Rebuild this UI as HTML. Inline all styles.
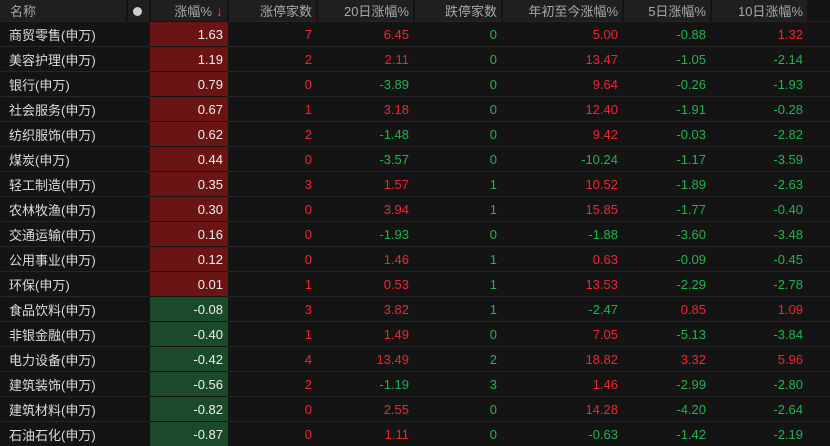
<!DOCTYPE html>
<html><head><meta charset="utf-8"><style>
*{margin:0;padding:0;box-sizing:border-box}
body{width:830px;height:444px;overflow:hidden;background:#141414;font-family:"Liberation Sans","Noto Sans CJK SC",sans-serif;font-size:13px;color:#dcdcdc}
table{border-collapse:collapse;table-layout:fixed;width:830px}
th{height:21px;background:#1f1f1f;color:#a8a8a8;font-weight:normal;text-align:right;padding-right:4px;border-right:2px solid #141414;font-size:13px;white-space:nowrap}
th.n{text-align:left;padding-left:10px}
th.last{border-right:none}
td{height:25px;border-top:1px solid #262626;text-align:right;padding-right:5px;white-space:nowrap;padding-top:1px}
td.n{text-align:left;padding-left:9px;color:#dcdcdc}
.r{color:#f0262e}.g{color:#1fb54a}
.cr{background:#6a1414;color:#eee;border-top:1px solid #141414}
.cg{background:#1a4a2a;color:#eee;border-top:1px solid #141414}
.dot{display:inline-block;width:9px;height:9px;border-radius:50%;background:#cfcfcf;vertical-align:-1px;margin-right:3px}
.arr{color:#f0462e;font-size:15px;font-weight:bold}
</style></head><body>
<table>
<colgroup><col style="width:127px"><col style="width:23px"><col style="width:78px"><col style="width:89px"><col style="width:97px"><col style="width:88px"><col style="width:121px"><col style="width:88px"><col style="width:97px"><col style="width:22px"></colgroup>
<tr><th class="n">名称</th><th style="text-align:center;padding:0"><span class="dot"></span></th><th>涨幅% <span class="arr">↓</span></th><th>涨停家数</th><th>20日涨幅%</th><th>跌停家数</th><th>年初至今涨幅%</th><th>5日涨幅%</th><th>10日涨幅%</th><th class="last" style="background:#141414"></th></tr>
<tr><td class="n">商贸零售(申万)</td><td></td><td class="cr">1.63</td><td class="r">7</td><td class="r">6.45</td><td class="g">0</td><td class="r">5.00</td><td class="g">-0.88</td><td class="r">1.32</td><td></td></tr>
<tr><td class="n">美容护理(申万)</td><td></td><td class="cr">1.19</td><td class="r">2</td><td class="r">2.11</td><td class="g">0</td><td class="r">13.47</td><td class="g">-1.05</td><td class="g">-2.14</td><td></td></tr>
<tr><td class="n">银行(申万)</td><td></td><td class="cr">0.79</td><td class="r">0</td><td class="g">-3.89</td><td class="g">0</td><td class="r">9.64</td><td class="g">-0.26</td><td class="g">-1.93</td><td></td></tr>
<tr><td class="n">社会服务(申万)</td><td></td><td class="cr">0.67</td><td class="r">1</td><td class="r">3.18</td><td class="g">0</td><td class="r">12.40</td><td class="g">-1.91</td><td class="g">-0.28</td><td></td></tr>
<tr><td class="n">纺织服饰(申万)</td><td></td><td class="cr">0.62</td><td class="r">2</td><td class="g">-1.48</td><td class="g">0</td><td class="r">9.42</td><td class="g">-0.03</td><td class="g">-2.82</td><td></td></tr>
<tr><td class="n">煤炭(申万)</td><td></td><td class="cr">0.44</td><td class="r">0</td><td class="g">-3.57</td><td class="g">0</td><td class="g">-10.24</td><td class="g">-1.17</td><td class="g">-3.59</td><td></td></tr>
<tr><td class="n">轻工制造(申万)</td><td></td><td class="cr">0.35</td><td class="r">3</td><td class="r">1.57</td><td class="g">1</td><td class="r">10.52</td><td class="g">-1.89</td><td class="g">-2.63</td><td></td></tr>
<tr><td class="n">农林牧渔(申万)</td><td></td><td class="cr">0.30</td><td class="r">0</td><td class="r">3.94</td><td class="g">1</td><td class="r">15.85</td><td class="g">-1.77</td><td class="g">-0.40</td><td></td></tr>
<tr><td class="n">交通运输(申万)</td><td></td><td class="cr">0.16</td><td class="r">0</td><td class="g">-1.93</td><td class="g">0</td><td class="g">-1.88</td><td class="g">-3.60</td><td class="g">-3.48</td><td></td></tr>
<tr><td class="n">公用事业(申万)</td><td></td><td class="cr">0.12</td><td class="r">0</td><td class="r">1.46</td><td class="g">1</td><td class="r">0.63</td><td class="g">-0.09</td><td class="g">-0.45</td><td></td></tr>
<tr><td class="n">环保(申万)</td><td></td><td class="cr">0.01</td><td class="r">1</td><td class="r">0.53</td><td class="g">1</td><td class="r">13.53</td><td class="g">-2.29</td><td class="g">-2.78</td><td></td></tr>
<tr><td class="n">食品饮料(申万)</td><td></td><td class="cg">-0.08</td><td class="r">3</td><td class="r">3.82</td><td class="g">1</td><td class="g">-2.47</td><td class="r">0.85</td><td class="r">1.09</td><td></td></tr>
<tr><td class="n">非银金融(申万)</td><td></td><td class="cg">-0.40</td><td class="r">1</td><td class="r">1.49</td><td class="g">0</td><td class="r">7.05</td><td class="g">-5.13</td><td class="g">-3.84</td><td></td></tr>
<tr><td class="n">电力设备(申万)</td><td></td><td class="cg">-0.42</td><td class="r">4</td><td class="r">13.49</td><td class="g">2</td><td class="r">18.82</td><td class="r">3.32</td><td class="r">5.96</td><td></td></tr>
<tr><td class="n">建筑装饰(申万)</td><td></td><td class="cg">-0.56</td><td class="r">2</td><td class="g">-1.19</td><td class="g">3</td><td class="r">1.46</td><td class="g">-2.99</td><td class="g">-2.80</td><td></td></tr>
<tr><td class="n">建筑材料(申万)</td><td></td><td class="cg">-0.82</td><td class="r">0</td><td class="r">2.55</td><td class="g">0</td><td class="r">14.28</td><td class="g">-4.20</td><td class="g">-2.64</td><td></td></tr>
<tr><td class="n">石油石化(申万)</td><td></td><td class="cg">-0.87</td><td class="r">0</td><td class="r">1.11</td><td class="g">0</td><td class="g">-0.63</td><td class="g">-1.42</td><td class="g">-2.19</td><td></td></tr>
</table>
</body></html>
